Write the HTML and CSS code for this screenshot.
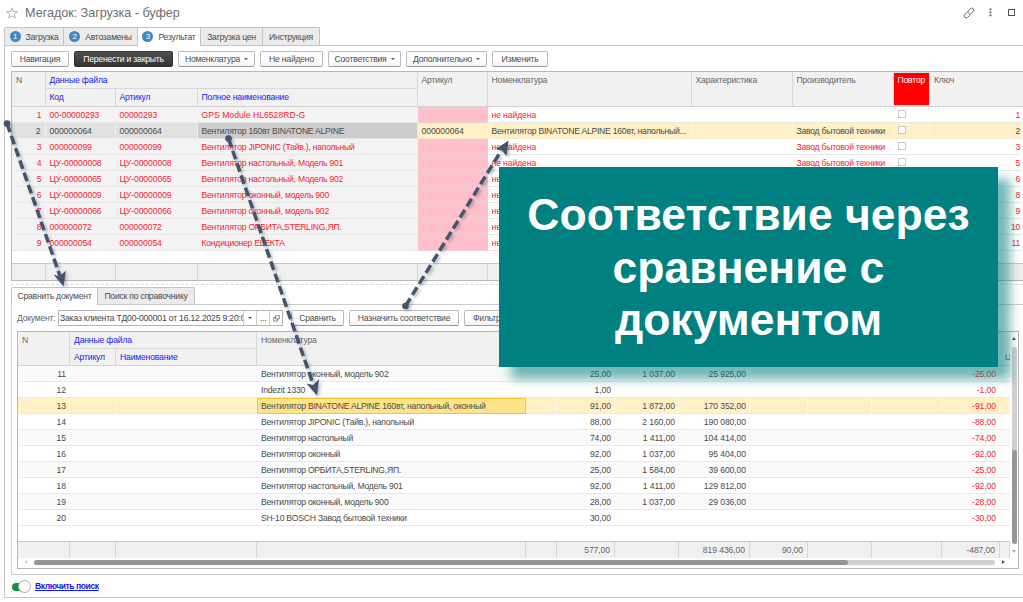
FILE: index.html
```html
<!DOCTYPE html>
<html lang="ru">
<head>
<meta charset="utf-8">
<title>Мегадок: Загрузка - буфер</title>
<link rel="stylesheet" href="styles.css">
</head>
<body>
<div class="window">
  <header class="titlebar">
    <svg class="star" viewBox="0 0 12 12"><path d="M6 .9 7.4 4.5 11.3 4.7 8.3 7.1 9.3 10.9 6 8.8 2.7 10.9 3.7 7.1 .7 4.7 4.6 4.5Z"/></svg>
    <h1>Мегадок: Загрузка - буфер</h1>
    <svg class="ico link" viewBox="0 0 12 12"><path d="M5.2 3.6 7.3 1.7a2 2 0 0 1 2.9 2.8L8.2 6.600a1.900 1.900 0 0 1-2.600 .2M6.600 8.400 4.700 10.300A2 2 0 0 1 1.800 7.500L3.800 5.400a1.900 1.900 0 0 1 2.600-.2"/></svg>
    <svg class="ico dots" viewBox="0 0 3 9"><path d="M.5 .5h2v1.8h-2zM.5 3.5h2v1.8h-2zM.5 6.5h2v1.8h-2z"/></svg>
    <span class="maximize"></span>
  </header>
  <nav class="tabs main-tabs">
    <span class="tab t1"><i>1</i>Загрузка</span><span class="tab t2"><i>2</i>Автозамены</span><span class="tab t3 active"><i>3</i>Результат</span><span class="tab t4">Загрузка цен</span><span class="tab t5">Инструкция</span>
  </nav>
  <main class="panel">
    <div class="toolbar">
      <button class="b1">Навигация</button>
      <button class="b2 dark">Перенести и закрыть</button>
      <button class="b3">Номенклатура<u></u></button>
      <button class="b4">Не найдено</button>
      <button class="b5">Соответствия<u></u></button>
      <button class="b6">Дополнительно<u></u></button>
      <button class="b7">Изменить</button>
    </div>

    <section class="grid files">
      <div class="head">
        <div class="h-n">N</div>
        <div class="h-group"><div class="h-top">Данные файла</div><div class="h-sub"><span>Код</span><span>Артикул</span><span>Полное наименование</span></div></div>
        <div>Артикул</div><div>Номенклатура</div><div>Характеристика</div><div>Производитель</div><div class="repeat">Повтор</div><div>Ключ</div>
      </div>
      <div class="row"><span>1</span><span>00-00000293</span><span>00000293</span><span class="latin">GPS Module HL6528RD-G</span><span></span><span>не найдена</span><span></span><span></span><span><b></b></span><span>1</span></div>
      <div class="row sel"><span>2</span><span>000000064</span><span>000000064</span><span>Вентилятор 160вт BINATONE ALPINE</span><span>000000064</span><span class="name">Вентилятор BINATONE ALPINE 160вт, напольный...</span><span></span><span>Завод бытовой техники</span><span><b></b></span><span>2</span></div>
      <div class="row"><span>3</span><span>000000099</span><span>000000099</span><span>Вентилятор JIPONIC (Тайв.), напольный</span><span></span><span>не найдена</span><span></span><span>Завод бытовой техники</span><span><b></b></span><span>3</span></div>
      <div class="row"><span>4</span><span>ЦУ-00000008</span><span>ЦУ-00000008</span><span>Вентилятор настольный, Модель 901</span><span></span><span>не найдена</span><span></span><span>Завод бытовой техники</span><span><b></b></span><span>5</span></div>
      <div class="row"><span>5</span><span>ЦУ-00000065</span><span>ЦУ-00000065</span><span>Вентилятор настольный, Модель 902</span><span></span><span>не</span><span></span><span></span><span></span><span>6</span></div>
      <div class="row"><span>6</span><span>ЦУ-00000009</span><span>ЦУ-00000009</span><span>Вентилятор оконный, модель 900</span><span></span><span>не</span><span></span><span></span><span></span><span>8</span></div>
      <div class="row"><span>7</span><span>ЦУ-00000066</span><span>ЦУ-00000066</span><span>Вентилятор оконный, модель 902</span><span></span><span>не</span><span></span><span></span><span></span><span>9</span></div>
      <div class="row"><span>8</span><span>000000072</span><span>000000072</span><span>Вентилятор ОРБИТА,STERLING,ЯП.</span><span></span><span>не</span><span></span><span></span><span></span><span>10</span></div>
      <div class="row"><span>9</span><span>000000054</span><span>000000054</span><span>Кондиционер ЕLЕКТА</span><span></span><span>не</span><span></span><span></span><span></span><span>11</span></div>
      <div class="foot"><span></span><span></span><span></span><span></span><span></span><span></span><span></span><span></span><span></span><span></span></div>
    </section>
    <div class="splitter"></div>

    <nav class="tabs sub-tabs"><span class="tab s1 active">Сравнить документ</span><span class="tab s2">Поиск по справочнику</span></nav>
    <section class="subpanel">
      <div class="form">
        <label>Документ:</label>
        <div class="field"><span class="value">Заказ клиента ТД00-000001 от 16.12.2025 9:20:0</span><span class="drop"><u></u></span><span class="more">...</span><span class="open"><svg viewBox="0 0 8 8"><path d="M3 .8h4.2v3.8H3zM3 2.8H.8v4.2h4.4V4.6"/></svg></span></div>
        <button class="c1">Сравнить</button><button class="c2">Назначить соответствие</button><button class="c3">Фильтр</button>
      </div>
      <div class="grid doc">
        <div class="doc-main">
          <div class="head">
            <div class="h-n">N</div>
            <div class="h-group"><div class="h-top">Данные файла</div><div class="h-sub"><span>Артикул</span><span>Наименование</span></div></div>
            <div>Номенклатура</div><div class="h-last">Ц</div>
          </div>
          <div class="row"><span>11</span><span></span><span></span><span>Вентилятор оконный, модель 902</span><span></span><span>25,00</span><span>1 037,00</span><span>25 925,00</span><span></span><span></span><span></span><span>-25,00</span><span></span></div>
          <div class="row"><span>12</span><span></span><span></span><span>Indezit 1330</span><span></span><span>1,00</span><span></span><span></span><span></span><span></span><span></span><span>-1,00</span><span></span></div>
          <div class="row sel"><span>13</span><span></span><span></span><span>Вентилятор BINATONE ALPINE 160вт, напольный, оконный</span><span></span><span>91,00</span><span>1 872,00</span><span>170 352,00</span><span></span><span></span><span></span><span>-91,00</span><span></span></div>
          <div class="row"><span>14</span><span></span><span></span><span>Вентилятор JIPONIC (Тайв.), напольный</span><span></span><span>88,00</span><span>2 160,00</span><span>190 080,00</span><span></span><span></span><span></span><span>-88,00</span><span></span></div>
          <div class="row"><span>15</span><span></span><span></span><span>Вентилятор настольный</span><span></span><span>74,00</span><span>1 411,00</span><span>104 414,00</span><span></span><span></span><span></span><span>-74,00</span><span></span></div>
          <div class="row"><span>16</span><span></span><span></span><span>Вентилятор оконный</span><span></span><span>92,00</span><span>1 037,00</span><span>95 404,00</span><span></span><span></span><span></span><span>-92,00</span><span></span></div>
          <div class="row"><span>17</span><span></span><span></span><span>Вентилятор ОРБИТА,STERLING,ЯП.</span><span></span><span>25,00</span><span>1 584,00</span><span>39 600,00</span><span></span><span></span><span></span><span>-25,00</span><span></span></div>
          <div class="row"><span>18</span><span></span><span></span><span>Вентилятор настольный, Модель 901</span><span></span><span>92,00</span><span>1 411,00</span><span>129 812,00</span><span></span><span></span><span></span><span>-92,00</span><span></span></div>
          <div class="row"><span>19</span><span></span><span></span><span>Вентилятор оконный, модель 900</span><span></span><span>28,00</span><span>1 037,00</span><span>29 036,00</span><span></span><span></span><span></span><span>-28,00</span><span></span></div>
          <div class="row"><span>20</span><span></span><span></span><span>SH-10 BOSCH Завод бытовой техники</span><span></span><span>30,00</span><span></span><span></span><span></span><span></span><span></span><span>-30,00</span><span></span></div>
          <div class="foot"><span></span><span></span><span></span><span></span><span></span><span>577,00</span><span></span><span>819 436,00</span><span>90,00</span><span></span><span></span><span>-487,00</span><span></span></div>
          <div class="hscroll"><i class="left"></i><div class="track"><div class="thumb"></div></div><i class="right"></i></div>
        </div>
        <div class="vscroll"><i class="up"></i><div class="track"><div class="thumb"></div></div><i class="down"></i></div>
      </div>
    </section>
    <div class="search"><span class="toggle"></span><a>Включить поиск</a></div>
  </main>
</div>

<svg class="arrows" viewBox="0 0 1023 602">
  <g class="arrow"><circle cx="7" cy="123.500" r="3.300"/><path class="line" d="M7 123.500 60 276"/><path d="M63.500 286.500 53.500 274.500 59.500 276.500 66 270.500Z"/></g>
  <g class="arrow"><circle cx="228.500" cy="138.500" r="3.300"/><path class="line" d="M228.500 138.500 313 384"/><path d="M317 395.500 306.500 383.500 313 385 319 379Z"/></g>
  <g class="arrow"><circle cx="405.500" cy="306" r="3.300"/><path class="line" d="M405.500 306 501 151"/><path d="M508.500 140.500 496 149 502 150.500 506.500 156Z"/></g>
</svg>
<div class="callout">Соответствие через<br>сравнение с<br>документом</div>
</body>
</html>
```
FILE: styles.css
```css
* { box-sizing: border-box; }
body {
  margin: 0; width: 1023px; height: 602px; overflow: hidden; position: relative;
  background: #fff; color: #4a4a4a; letter-spacing: -.23px;
  font: 8.6px/16px "Liberation Sans", Arial, sans-serif;
}
.window { width: 1023px; height: 602px; overflow: hidden; }
.titlebar { height: 27px; display: flex; align-items: center; padding: 0 8px 2px 6px; }
.star { width: 12px; height: 12px; fill: none; stroke: #aaa; stroke-width: .9; }
h1 { margin: 0 auto 0 7px; font-size: 12.7px; font-weight: 400; letter-spacing: -.07px; color: #707070; white-space: nowrap; }
.ico { fill: none; stroke: #666; stroke-width: 1; }
.link { width: 12px; height: 12px; margin-right: 14px; }
.dots { width: 3px; height: 9px; fill: #666; stroke: none; margin-right: 16px; }
.maximize { width: 7px; height: 7px; border: 1px solid #555; }

.tabs { display: flex; height: 18px; }
.tab { display: flex; align-items: center; justify-content: center; height: 18px; background: #ebebeb; border: 1px solid #c4c4c4; border-left-width: 0; border-bottom: 0; white-space: nowrap; }
.tab:first-child { border-left-width: 1px; border-radius: 2px 0 0 0; }
.tab:last-child { border-radius: 0 2px 0 0; }
.tab.active { background: #fff; height: 19px; padding-bottom: 1px; position: relative; }
.tab i { width: 11px; height: 11px; border-radius: 50%; background: #4089bd; color: #fff; font: 8px/11px "Liberation Sans", sans-serif; text-align: center; margin-right: 5px; }
.main-tabs { padding-left: 4px; }
.t1 { width: 60px; } .t2 { width: 74px; } .t3 { width: 63px; } .t4 { width: 62px; } .t5 { width: 57px; }

.panel { width: 1030px; height: 553px; border: 1px solid #c4c4c4; margin-left: 4px; padding: 5px 0 0 6px; }
.toolbar { display: flex; height: 20px; }
button { height: 16px; padding: 0; margin: 0; border: 1px solid #bbb; border-bottom-color: #999; border-radius: 2px; background: linear-gradient(#fff 60%, #f2f2f2); color: #4a4a4a; font: inherit; letter-spacing: -.21px; line-height: 14px; white-space: nowrap; display: flex; align-items: center; justify-content: center; flex: none; }
button.dark { background: linear-gradient(#505050, #333); color: #fff; border-color: #333; }
u { display: inline-block; width: 0; height: 0; border: 2px solid transparent; border-top: 2px solid #555; border-bottom: 0; margin-left: 4px; }
.b1 { width: 58px; } .b2 { width: 99px; margin-left: 5px; } .b3 { width: 77px; margin-left: 5px; } .b4 { width: 63px; margin-left: 5px; } .b5 { width: 73px; margin-left: 5px; } .b6 { width: 81px; margin-left: 5px; } .b7 { width: 56px; margin-left: 5px; }

.grid { border: 1px solid #b8b8b8; background: #fff; white-space: nowrap; }
.head { display: grid; background: #f1f1f1; color: #666; height: 35px; border-bottom: 1px solid #d2d2d2; letter-spacing: -.17px; }
.head > div { border-right: 1px solid #d8d8d8; padding-left: 4px; overflow: hidden; }
.head > .h-group { padding: 0; color: #2020f0; }
.h-top { height: 17px; padding-left: 4px; border-bottom: 1px solid #d8d8d8; }
.h-sub { display: grid; height: 17px; line-height: 17px; }
.h-sub span { padding-left: 4px; border-right: 1px solid #d8d8d8; }
.h-sub span:last-child { border-right: 0; }
.row, .foot { display: grid; height: 16.04px; }
.row span { height: 16.04px; padding: 0 4px; line-height: 16.600px; border-bottom: 1px solid #e8e8e8; overflow: hidden; }
.foot { background: #f0f0f0; border-top: 1px solid #c8c8c8; color: #666; }
.foot span { border-right: 1px solid #d6d6d6; padding: 0 4px; }

.files { width: 1020px; height: 210px; }
.files .head { grid-template-columns: 33.500px 372px 70px 204px 101px 101px 36.500px 95px; }
.files .h-sub { grid-template-columns: 70px 82px 220px; }
.files .row, .files .foot { grid-template-columns: 33.500px 70px 82px 220px 70px 204px 101px 101px 36.500px 92px; }
.files .foot { grid-template-columns: 33.500px 70px 82px 220px 70px 204px 101px 101px 36.500px 100px; }
.files .head > .repeat { background: #f00; color: #fff; border: 1px solid #ddd; border-left: 0; padding-left: 4px; line-height: 14px; }
.files .row { color: #fa2030; }
.files .row span:nth-child(-n+4) { background: #f3f3f3; }
.files .row span:nth-child(-n+3), .files .row span:nth-child(5) { letter-spacing: -.08px; }
.files .row span:nth-child(6):not(.name) { letter-spacing: -.1px; }
.files .row .latin { letter-spacing: .03px; }
.files .row span:nth-child(5) { background: #ffc0cb; border-color: #eccfd5; }
.files .row span:first-child, .files .row span:last-child { text-align: right; }
.files .row span:last-child { padding-right: 2px; }
.files .row.sel { color: #4a4a4a; }
.files .row.sel span { background: #fff0c5; border-right: 1px solid #fff8e4; border-bottom-color: #f3e8c8; }
.files .row.sel span:last-child { border-right: 0; }
.files .row.sel span:nth-child(-n+3) { background: #e1e1e1; border-color: #f0f0f0; }
.files .row.sel span:nth-child(4) { background: #ccc; border-color: #e4e4e4; }
.files b { display: block; width: 8px; height: 8px; margin: 3px 0 0 0; border: 1px solid #c8c8c8; background: #fff; }
.files .foot { height: 17px; margin-top: 11.500px; }

.splitter { height: 0; margin-top: 3px; border-top: 1px dashed #ddd; }
.sub-tabs { margin-top: 2px; height: 17px; }
.sub-tabs .tab { height: 17px; }
.sub-tabs .tab.active { height: 18px; }
.s1 { width: 87px; } .s2 { width: 97px; }
.subpanel { width: 1025px; height: 271px; border: 1px solid #ccc; padding: 5px 0 0 5px; }
.form { display: flex; height: 21px; color: #666; }
label { width: 41px; line-height: 16px; }
.field { display: flex; width: 225px; height: 16px; border: 1px solid #b4b4b4; color: #444; line-height: 14px; }
.value { width: 186px; overflow: hidden; white-space: nowrap; padding-left: 1px; letter-spacing: -.18px; }
.drop, .more, .open { width: 13px; border-left: 1px solid #ccc; text-align: center; display: flex; align-items: center; justify-content: center; }
.drop u { margin: 0; }
.open svg { width: 7px; height: 7px; fill: none; stroke: #666; stroke-width: .9; }
.c1 { width: 53px; margin-left: 8px; } .c2 { width: 110px; margin-left: 5px; } .c3 { width: 60px; margin-left: 5px; justify-content: flex-start; padding-left: 8px; }

.doc { display: flex; width: 1002px; height: 238px; }
.doc-main { width: 992px; }
.doc .head { grid-template-columns: 52px 187px 732px 21px; height: 34px; }
.doc .head > .h-last { padding: 17px 0 0 16px; border: 0; }
.doc .head > div:nth-child(3) { border: 0; }
.doc .h-sub { grid-template-columns: 46px 141px; }
.doc .row, .doc .foot { grid-template-columns: 52px 46px 141px 269px 31px 58px 64px 71px 58px 64px 70px 58px 10px; }
.doc .row span:first-child, .doc .row span:nth-child(n+5), .doc .foot span { text-align: right; letter-spacing: -.08px; }
.doc .row span:nth-child(12) { color: #fa2030; }
.doc .row:nth-child(even) { background: #fafafa; }
.doc .row.sel { background: #fff0c5; }
.doc .row.sel span { border-right: 1px solid #fff8e4; border-bottom-color: #f3e8c8; padding-right: 3px; }
.doc .row.sel span:nth-child(4) { background: #ffe38b; border: 1px solid #f3c62e; padding-left: 3px; line-height: 14.600px; }
.doc .foot { height: 17px; margin-top: 14.600px; }
.hscroll { height: 9px; display: flex; align-items: center; padding: 0 5px 0 7px; }
.hscroll .track { width: 961px; height: 5px; margin: 0 7px 0 7px; background: #d0d0d0; border-radius: 3px; }
.hscroll .thumb { width: 814px; height: 5px; background: #969696; border-radius: 3px; }
.hscroll i, .vscroll i { width: 0; height: 0; border: 2px solid transparent; flex: none; }
.hscroll .left { border-right-color: #bbb; border-left: 0; }
.hscroll .right { border-left: 3px solid #555; border-right: 0; }
.vscroll { width: 8px; display: flex; flex-direction: column; align-items: center; padding-top: 5px; }
.vscroll .up { border-bottom: 3px solid #555; border-top: 0; }
.vscroll .down { border-top: 3px solid #aaa; border-bottom: 0; }
.vscroll .track { width: 5px; height: 196px; margin: 7px 0 7px; padding-top: 103px; background: #d0d0d0; border-radius: 3px; }
.vscroll .thumb { width: 5px; height: 94px; background: #969696; border-radius: 3px; }

.search { display: flex; align-items: center; height: 22px; }
.toggle { width: 18px; height: 8px; margin: 1px 5px 0 1px; border-radius: 4px; background: #0b9444; display: flex; justify-content: flex-end; align-items: center; }
.toggle::after { content: ""; width: 11px; height: 11px; flex: none; margin-right: -1px; border: 1px solid #aaa; border-radius: 50%; background: #fff; }
a { color: #1515ff; font-weight: 700; text-decoration: underline; letter-spacing: -.46px; }

.arrows { position: absolute; left: 0; top: 0; width: 1023px; height: 602px; filter: drop-shadow(2px 2px 1.500px rgba(60,70,90,.35)); }
.arrow { fill: #44546a; }
.arrow .line { fill: none; stroke: #44546a; stroke-width: 3.500; stroke-dasharray: 9 4; }
.callout { position: absolute; left: 499px; top: 167px; width: 499px; height: 200px; padding-top: 22px; background: #008080; color: #fff; font-size: 44.500px; font-weight: 700; letter-spacing: 0; line-height: 52.700px; text-align: center; white-space: nowrap; box-shadow: 12px 12px 10px rgba(0,128,128,.55); }
```
